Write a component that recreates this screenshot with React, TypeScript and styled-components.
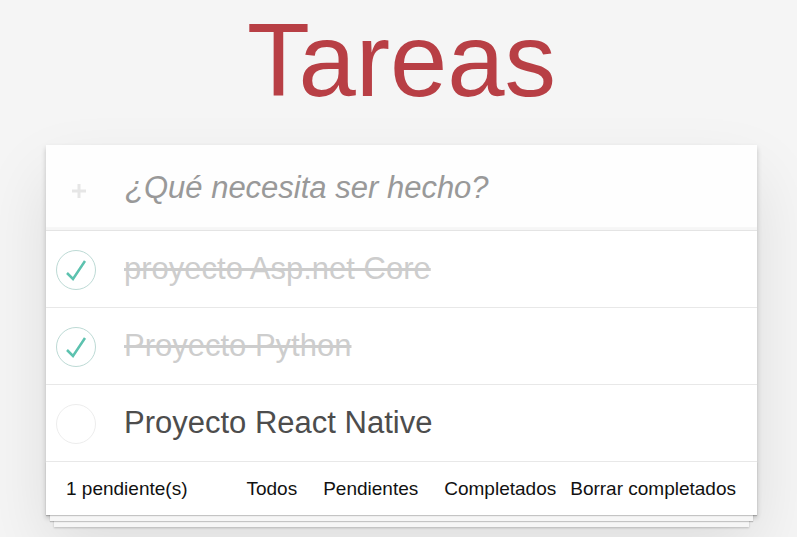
import React, { useState } from "react";
import styled, { createGlobalStyle } from "styled-components";

const GlobalStyle = createGlobalStyle`
  * { box-sizing: border-box; }
  body {
    margin: 0;
    background: #fff;
    color: #4d4d4d;
    font-family: "Liberation Sans", Arial, sans-serif;
  }
`;

const Page = styled.main`
  min-height: 100vh;
  padding: 0 40px 20px 46px;
  border: solid #fff;
  border-width: 0 3px 1px 0;
  background: #f5f5f5;
  overflow: hidden;
`;

const Title = styled.h1`
  margin: 0;
  height: 145px;
  text-align: center;
  font-size: 103px;
  line-height: 122px;
  font-weight: 400;
  color: #b83f45;
`;

const Card = styled.section`
  background: #fff;
  box-shadow: 0 3px 5px rgba(0, 0, 0, 0.2), 0 32px 64px rgba(0, 0, 0, 0.1);
`;

const NewTask = styled.form`
  display: flex;
  align-items: center;
  height: 85px;
  background: #fefefe;
  box-shadow: inset 0 -3px 1px rgba(0, 0, 0, 0.03);
`;

const AddButton = styled.button`
  width: 78px;
  padding: 6px 12px 0 0;
  border: 0;
  background: none;
  line-height: 0;
  color: #e6e6e6;
`;

const TaskInput = styled.input`
  flex: 1;
  min-width: 0;
  height: 60px;
  padding: 0 0 0 1px;
  border: 0;
  outline: 0;
  background: none;
  font: italic 31px "Liberation Sans", Arial, sans-serif;
  color: #4d4d4d;
  &::placeholder { color: #999; opacity: 1; }
`;

const TaskList = styled.ul`
  margin: 0;
  padding: 0;
  list-style: none;
  border-top: 1px solid #e4e4e4;
`;

const TaskRow = styled.li`
  border-bottom: 1px solid #e8e8e8;
`;

const TaskLabel = styled.label<{ $done: boolean }>`
  display: flex;
  align-items: center;
  height: 76px;
  font-size: 31px;
  line-height: 36px;
  color: ${(p) => (p.$done ? "#cdcdcd" : "#4d4d4d")};
  text-decoration: ${(p) => (p.$done ? "line-through" : "none")};
`;

const Toggle = styled.input`
  appearance: none;
  flex: none;
  width: 40px;
  height: 40px;
  margin: 1px 28px 0 10px;
  border: 1px solid #ededed;
  border-radius: 50%;
  &:checked {
    border-color: #bddad5;
    background: url("data:image/svg+xml,%3Csvg xmlns='http://www.w3.org/2000/svg' viewBox='0 0 38 38'%3E%3Cpath fill='none' stroke='%235dc2af' stroke-width='2.500' d='M10 22l6 6 12-18'/%3E%3C/svg%3E") center / 38px 38px no-repeat;
  }
`;

const Footer = styled.footer`
  display: flex;
  align-items: center;
  height: 53px;
  padding: 0 21px 0 20px;
  font-size: 19px;
  line-height: 22px;
  color: #111;
  box-shadow: 0 1px 1px rgba(0, 0, 0, 0.2), 0 10px 0 -4px #f6f6f6,
    0 11px 1px -4px rgba(0, 0, 0, 0.2), 0 20px 0 -8px #f6f6f6,
    0 21px 2px -8px rgba(0, 0, 0, 0.2);
`;

const Filters = styled.nav`
  display: flex;
  gap: 26px;
  margin: 0 14px 0 auto;
`;

const FilterLink = styled.a`
  color: inherit;
  text-decoration: none;
`;

const ClearButton = styled.button`
  padding: 0;
  border: 0;
  background: none;
  font: inherit;
  color: inherit;
`;

const initialTasks = [
  { id: 1, name: "proyecto Asp.net Core", done: true },
  { id: 2, name: "Proyecto Python", done: true },
  { id: 3, name: "Proyecto React Native", done: false },
];

export default function App() {
  const [tasks, setTasks] = useState(initialTasks);
  const toggle = (id: number) =>
    setTasks(tasks.map((t) => (t.id === id ? { ...t, done: !t.done } : t)));

  return (
    <>
      <GlobalStyle />
      <Page>
        <Title>Tareas</Title>
        <Card>
          <NewTask onSubmit={(e) => e.preventDefault()}>
            <AddButton aria-label="Agregar">
              <svg width="14" height="14" viewBox="0 0 14 14" stroke="currentColor" strokeWidth="3">
                <path d="M7 0v14M0 7h14" />
              </svg>
            </AddButton>
            <TaskInput aria-label="Nueva tarea" placeholder="¿Qué necesita ser hecho?" />
          </NewTask>
          <TaskList>
            {tasks.map((t) => (
              <TaskRow key={t.id}>
                <TaskLabel $done={t.done}>
                  <Toggle type="checkbox" checked={t.done} onChange={() => toggle(t.id)} />
                  <span>{t.name}</span>
                </TaskLabel>
              </TaskRow>
            ))}
          </TaskList>
          <Footer>
            <span>{tasks.filter((t) => !t.done).length} pendiente(s)</span>
            <Filters aria-label="Filtros">
              <FilterLink href="#todos">Todos</FilterLink>
              <FilterLink href="#pendientes">Pendientes</FilterLink>
              <FilterLink href="#completados">Completados</FilterLink>
            </Filters>
            <ClearButton type="button" onClick={() => setTasks(tasks.filter((t) => !t.done))}>
              Borrar completados
            </ClearButton>
          </Footer>
        </Card>
      </Page>
    </>
  );
}
